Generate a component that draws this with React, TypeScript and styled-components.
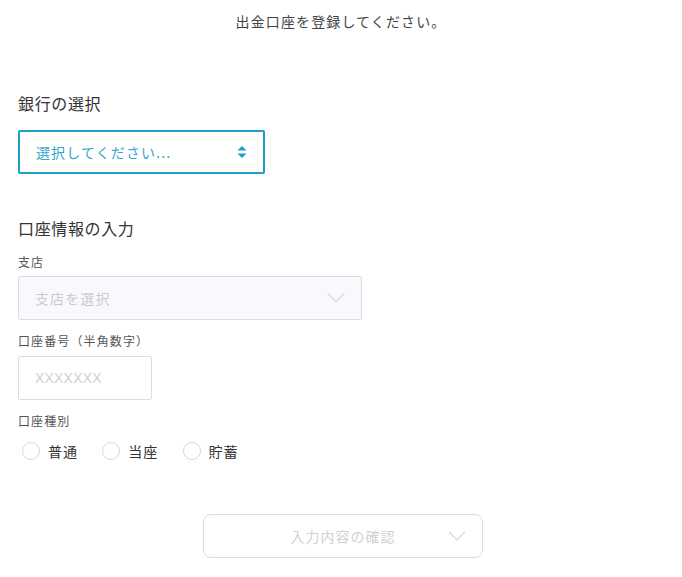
import * as React from "react";
import styled, { createGlobalStyle } from "styled-components";

const GlobalStyle = createGlobalStyle`
  html, body {
    margin: 0;
    padding: 0;
    background: #fff;
  }
  body {
    font-family: "Noto Sans CJK JP", "Noto Sans", sans-serif;
    color: #333;
    letter-spacing: 0.07em;
  }
  * { box-sizing: border-box; }
`;

const Page = styled.div`
  width: 682px;
  height: 577px;
  padding: 0 18px;
  display: flex;
  flex-direction: column;
  overflow: hidden;
`;

const Lead = styled.p`
  margin: 10px 0 0;
  text-align: center;
  font-size: 14px;
  line-height: 22px;
  color: #444;
`;

const Heading = styled.h2<{ $top: number }>`
  margin: ${(p) => p.$top}px 0 0;
  font-size: 16px;
  font-weight: 400;
  line-height: 24px;
  letter-spacing: 0.04em;
  color: #333;
`;

const Label = styled.div<{ $top: number }>`
  margin-top: ${(p) => p.$top}px;
  font-size: 12px;
  line-height: 18px;
  color: #555;
`;

const Field = styled.div<{ $width: number; $active?: boolean; $disabled?: boolean; $top: number }>`
  margin-top: ${(p) => p.$top}px;
  width: ${(p) => p.$width}px;
  height: 44px;
  display: flex;
  align-items: center;
  justify-content: space-between;
  padding: 0 16px 0 16px;
  border: ${(p) => (p.$active ? "2px solid #1e9fc5" : "1px solid #dcdcdf")};
  border-radius: 2px;
  background: ${(p) => (p.$disabled ? "#f9f9fd" : "#fff")};
  font-size: 14px;
  color: ${(p) => (p.$active ? "#35a5cb" : "#c9c9cf")};
`;

const Placeholder = styled.span`
  font-family: "Liberation Sans", Arial, sans-serif;
  font-size: 14px;
  color: #cfcfd4;
  letter-spacing: 0.2px;
`;

const RadioRow = styled.div`
  margin-top: 11px;
  display: flex;
  align-items: center;
  gap: 24px;
  padding-left: 4px;
`;

const RadioItem = styled.label`
  display: flex;
  align-items: center;
  gap: 8px;
  font-size: 14px;
  color: #333;
`;

const Circle = styled.span`
  width: 18px;
  height: 18px;
  border-radius: 50%;
  border: 1px solid #d8d8dc;
  background: #fff;
`;

const Footer = styled.div`
  margin-top: 53px;
  display: flex;
  justify-content: center;
  padding-left: 4px;
`;

const ConfirmButton = styled.button`
  position: relative;
  width: 280px;
  height: 44px;
  border: 1px solid #dcdcdf;
  border-radius: 8px;
  background: #fff;
  font-family: inherit;
  font-size: 14px;
  letter-spacing: 0.07em;
  color: #d0d0d5;
  display: flex;
  align-items: center;
  justify-content: center;
`;

const ButtonChevron = styled.span`
  position: absolute;
  right: 16px;
  top: 16px;
  display: flex;
`;

const Chevron = ({ color }: { color: string }) => (
  <svg width="18" height="10" viewBox="0 0 18 10" fill="none">
    <path d="M1 1l8 8 8-8" stroke={color} strokeWidth="1.2" />
  </svg>
);

const UpDown = () => (
  <svg width="10" height="14" viewBox="0 0 10 14">
    <path d="M5 1L9.5 5.5H0.5z" fill="#1e9fc5" />
    <path d="M5 13L9.5 8.5H0.5z" fill="#1e9fc5" />
  </svg>
);

export default function App() {
  return (
    <>
      <GlobalStyle />
      <Page>
        <Lead>出金口座を登録してください。</Lead>

        <Heading $top={59}>銀行の選択</Heading>
        <Field $top={15} $width={247} $active>
          <span>選択してください...</span>
          <UpDown />
        </Field>

        <Heading $top={42}>口座情報の入力</Heading>
        <Label $top={13}>支店</Label>
        <Field $top={5} $width={344} $disabled>
          <span>支店を選択</span>
          <Chevron color="#d6d6dc" />
        </Field>

        <Label $top={12}>口座番号（半角数字）</Label>
        <Field $top={6} $width={134}>
          <Placeholder>XXXXXXX</Placeholder>
        </Field>

        <Label $top={12}>口座種別</Label>
        <RadioRow>
          <RadioItem>
            <Circle />
            普通
          </RadioItem>
          <RadioItem>
            <Circle />
            当座
          </RadioItem>
          <RadioItem>
            <Circle />
            貯蓄
          </RadioItem>
        </RadioRow>

        <Footer>
          <ConfirmButton type="button">
            入力内容の確認
            <ButtonChevron>
              <Chevron color="#d6d6dc" />
            </ButtonChevron>
          </ConfirmButton>
        </Footer>
      </Page>
    </>
  );
}
